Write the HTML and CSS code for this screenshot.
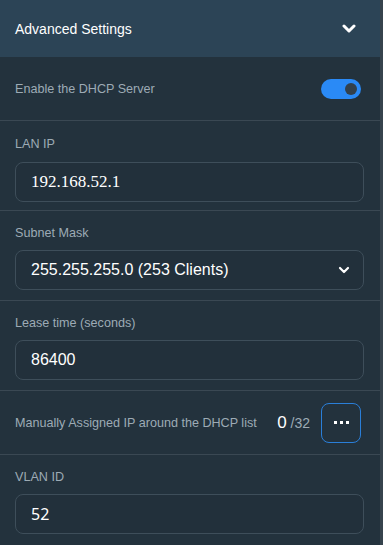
FILE: index.html
```html
<!DOCTYPE html>
<html lang="en">
<head>
    <meta charset="UTF-8">
    <meta name="viewport" content="width=device-width, initial-scale=1.0">
    <title>Advanced Settings</title>
    <link rel="stylesheet" href="styles.css">
</head>
<body>

<div class="panel">
    <div class="panel-header">
        <span class="panel-title">Advanced Settings</span>
        <svg class="chevron" width="14" height="10" viewBox="0 0 14 10">
            <path d="M2 2 L7 7 L12 2" fill="none" stroke="#fff" stroke-width="3" stroke-linecap="round" stroke-linejoin="round"/>
        </svg>
    </div>

    <div class="row">
        <span class="label">Enable the DHCP Server</span>
        <span class="toggle on"><span class="knob"></span></span>
    </div>

    <div class="field first">
        <div class="label">LAN IP</div>
        <div class="input serif">192.168.52.1</div>
    </div>

    <div class="field">
        <div class="label">Subnet Mask</div>
        <div class="input select">
            <span>255.255.255.0 (253 Clients)</span>
            <svg width="12" height="8" viewBox="0 0 12 8">
                <path d="M2 2 L6 6 L10 2" fill="none" stroke="#fff" stroke-width="2.2" stroke-linecap="round" stroke-linejoin="round"/>
            </svg>
        </div>
    </div>

    <div class="field">
        <div class="label">Lease time (seconds)</div>
        <div class="input">86400</div>
    </div>

    <div class="row manual">
        <span class="label">Manually Assigned IP around the DHCP list</span>
        <span class="count"><b>0</b> /32</span>
        <button class="more-btn">
            <span></span><span></span><span></span>
        </button>
    </div>

    <div class="field">
        <div class="label">VLAN ID</div>
        <div class="input noto">52</div>
    </div>
</div>

</body>
</html>
```

FILE: styles.css
```css
body {
    margin: 0;
    background: #23323d;
    font-family: "Liberation Sans", Arial, sans-serif;
    overflow: hidden;
}

.panel {
    width: 380px;
    height: 545px;
    background: #23323d;
    border-right: 3px solid #36434d;
}

.panel-header {
    height: 57px;
    background: #2c4456;
    display: flex;
    align-items: center;
    justify-content: space-between;
    padding: 0 24px 0 15px;
}

.panel-title {
    color: #fff;
    font-size: 14px;
}

.row {
    height: 63px;
    display: flex;
    align-items: center;
    padding: 0 19px 0 15px;
    border-bottom: 1px solid #3a4853;
}

.row .label {
    flex: 1;
}

.label {
    color: #9dabb5;
    font-size: 12.6px;
    line-height: 16px;
}

.toggle {
    width: 40px;
    height: 20px;
    border-radius: 10px;
    background: #2a8af6;
    display: flex;
    align-items: center;
    justify-content: flex-end;
    padding: 0 4px;
    box-sizing: border-box;
}

.knob {
    width: 12px;
    height: 12px;
    border-radius: 50%;
    background: #33414c;
}

.field {
    padding: 14px 16px 10px 15px;
    border-bottom: 1px solid #3a4853;
}

.field.first {
    padding-top: 15px;
    padding-bottom: 8px;
}

.field:last-child {
    border-bottom: none;
}

.field .label {
    margin-bottom: 9px;
}

.field.first .label {
    margin-bottom: 10px;
}

.input {
    height: 40px;
    box-sizing: border-box;
    border: 1px solid #3e4e5a;
    border-radius: 8px;
    background: #22303b;
    color: #fff;
    font-size: 16px;
    display: flex;
    align-items: center;
    padding: 0 15px;
}

.input.serif {
    font-family: "Liberation Serif", "Times New Roman", serif;
    font-size: 17px;
}

.input.noto {
    font-family: "Noto Sans", sans-serif;
}

.select {
    justify-content: space-between;
    padding-right: 13px;
}

.manual {
    height: 63px;
}

.count {
    color: #9dabb5;
    font-size: 14px;
    margin-right: 11px;
}

.count b {
    color: #fff;
    font-weight: normal;
    font-size: 17px;
}

.more-btn {
    width: 40px;
    height: 40px;
    border: 1px solid #2a7fd9;
    border-radius: 8px;
    background: transparent;
    display: flex;
    align-items: center;
    justify-content: center;
    gap: 3px;
    padding: 0;
}

.more-btn span {
    width: 3px;
    height: 3px;
    background: #fff;
}
```
